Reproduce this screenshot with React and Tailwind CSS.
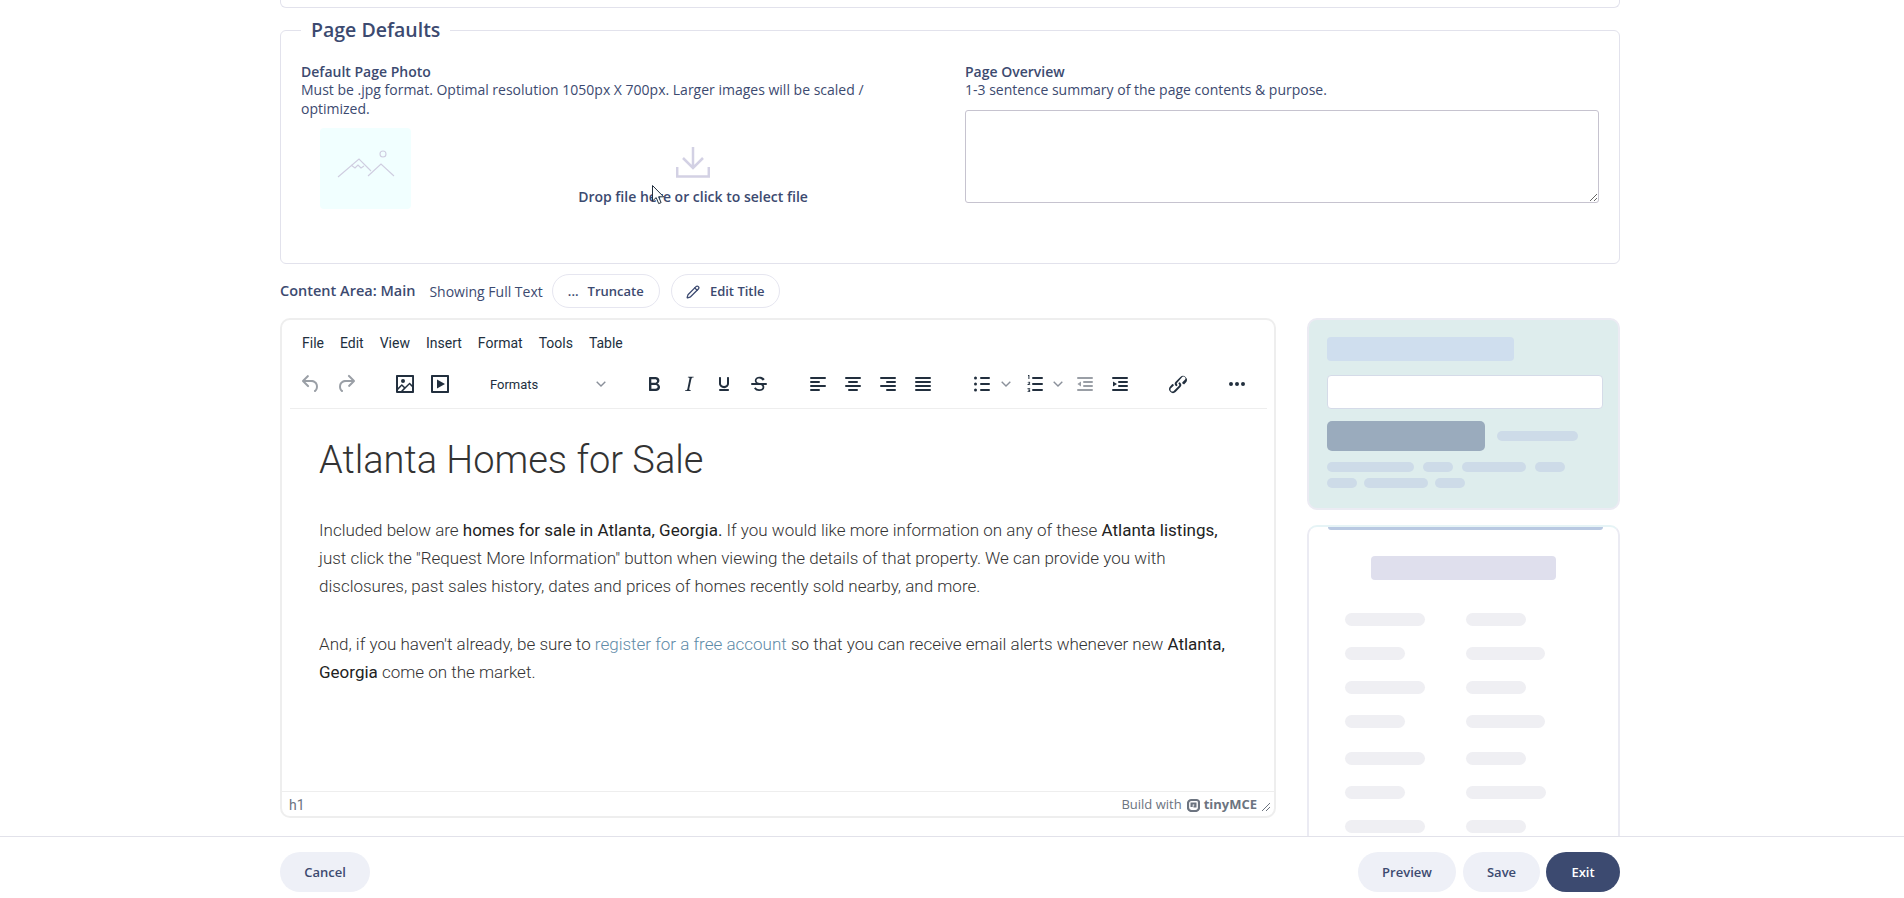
import React from 'react';
import { Pencil } from 'lucide-react';

const ICONS = {
  undo: 'M6.4 8H12c3.7 0 6.2 2 6.8 5.1.6 2.7-.4 5.6-2.3 6.8a1 1 0 0 1-1-1.8c1.1-.6 1.8-2.7 1.4-4.6-.5-2.1-2.1-3.5-4.9-3.5H6.4l3.3 3.3a1 1 0 1 1-1.4 1.4l-5-5a1 1 0 0 1 0-1.4l5-5a1 1 0 0 1 1.4 1.4L6.4 8Z',
  redo: 'M17.6 10H12c-2.8 0-4.4 1.4-4.9 3.5-.4 2 .3 4 1.4 4.6a1 1 0 1 1-1 1.8c-2-1.2-2.9-4.1-2.3-6.8.6-3 3-5.1 6.8-5.1h5.6l-3.3-3.3a1 1 0 1 1 1.4-1.4l5 5a1 1 0 0 1 0 1.4l-5 5a1 1 0 0 1-1.4-1.4l3.3-3.3Z',
  image: 'M5 15.7l3.3-3.2c.3-.3.7-.3 1 0L12 15l4.1-4c.3-.4.8-.4 1 0l2 1.9V5H5v10.7ZM5 18V19h3l2.8-2.9-2-2L5 17.9Zm14-3l-2.5-2.4-6.4 6.5H19v-4ZM4 3h16c.6 0 1 .4 1 1v16c0 .6-.4 1-1 1H4a1 1 0 0 1-1-1V4c0-.6.4-1 1-1Zm6 8a2 2 0 1 0 0-4 2 2 0 0 0 0 4Z',
  media: 'M4 3h16c.6 0 1 .4 1 1v16c0 .6-.4 1-1 1H4a1 1 0 0 1-1-1V4c0-.6.4-1 1-1Zm1 2v14h14V5H5Zm4 2.5 8 4.5-8 4.5v-9Z',
  bold: 'M7.8 19c-.3 0-.5 0-.6-.2l-.2-.5V5.7c0-.2 0-.4.2-.5l.6-.2h5c1.5 0 2.7.3 3.5 1 .7.6 1.1 1.4 1.1 2.5a3 3 0 0 1-.6 1.9c-.4.6-1 1-1.6 1.2.4.1.9.3 1.3.6s.8.7 1 1.2c.4.4.5 1 .5 1.6 0 1.3-.4 2.3-1.3 3-.8.7-2.1 1-3.8 1H7.8Zm5-8.3c.6 0 1.2-.1 1.6-.5.4-.3.6-.7.6-1.3 0-1.1-.8-1.7-2.3-1.7H9.3v3.5h3.4Zm.5 6c.7 0 1.3-.1 1.7-.4.4-.4.6-.9.6-1.5s-.2-1-.7-1.4c-.4-.3-1-.4-2-.4H9.4v3.8h4Z',
  italic: 'M16.7 4.7l-.1.9h-.3c-.6 0-1 0-1.4.3-.3.3-.4.6-.5 1.1l-2.1 9.8v.6c0 .5.4.8 1.4.8h.2l-.2.8H8l.2-.8h.2c1.1 0 1.8-.5 2-1.5l2-9.8.1-.5c0-.6-.4-.8-1.4-.8h-.3l.2-.9h5.8Z',
  underline: 'M16 5c.6 0 1 .4 1 1v5.5a4 4 0 0 1-.4 1.8l-1 1.4a5.3 5.3 0 0 1-5.5 1 5 5 0 0 1-1.6-1c-.5-.4-.8-.9-1.1-1.4a4 4 0 0 1-.4-1.8V6c0-.6.4-1 1-1s1 .4 1 1v5.5c0 .3 0 .6.2 1l.6.7a3.3 3.3 0 0 0 2.2.8 3.4 3.4 0 0 0 2.2-.8c.3-.2.4-.5.6-.8l.2-.9V6c0-.6.4-1 1-1ZM8 17h8c.6 0 1 .4 1 1s-.4 1-1 1H8a1 1 0 0 1 0-2Z',
  strike: 'M15.6 8.5c-.5-.7-1-1.1-1.3-1.3-.6-.4-1.3-.6-2-.6-2.7 0-2.8 1.7-2.8 2.1 0 1.6 1.8 2 3.2 2.3 4.4.9 4.6 2.8 4.6 3.9 0 1.4-.7 4.1-5 4.1A6.2 6.2 0 0 1 7 16.4l1.5-1.1c.4.6 1.6 2 3.7 2 1.6 0 2.5-.4 3-1 .3-.4.3-.9.3-1.3 0-1.4-1.1-1.9-3.1-2.3-1.6-.4-4.6-1.2-4.6-4.1 0-2.6 2.2-3.9 4.7-3.9 1.6 0 3 .5 4 1.2.4.3.8.7 1.2 1.3l-1.7 1.3ZM5 11h14a1 1 0 0 1 0 2H5a1 1 0 0 1 0-2Z',
  alignLeft: 'M5 5h14a1 1 0 0 1 0 2H5a1 1 0 1 1 0-2Zm0 4h8a1 1 0 0 1 0 2H5a1 1 0 1 1 0-2Zm0 8h8a1 1 0 0 1 0 2H5a1 1 0 0 1 0-2Zm0-4h14a1 1 0 0 1 0 2H5a1 1 0 0 1 0-2Z',
  alignCenter: 'M5 5h14a1 1 0 0 1 0 2H5a1 1 0 1 1 0-2Zm3 4h8a1 1 0 0 1 0 2H8a1 1 0 1 1 0-2Zm0 8h8a1 1 0 0 1 0 2H8a1 1 0 0 1 0-2Zm-3-4h14a1 1 0 0 1 0 2H5a1 1 0 0 1 0-2Z',
  alignRight: 'M5 5h14a1 1 0 0 1 0 2H5a1 1 0 1 1 0-2Zm6 4h8a1 1 0 0 1 0 2h-8a1 1 0 0 1 0-2Zm0 8h8a1 1 0 0 1 0 2h-8a1 1 0 0 1 0-2Zm-6-4h14a1 1 0 0 1 0 2H5a1 1 0 0 1 0-2Z',
  justify: 'M5 5h14a1 1 0 0 1 0 2H5a1 1 0 1 1 0-2Zm0 4h14a1 1 0 0 1 0 2H5a1 1 0 1 1 0-2Zm0 4h14a1 1 0 0 1 0 2H5a1 1 0 0 1 0-2Zm0 4h14a1 1 0 0 1 0 2H5a1 1 0 0 1 0-2Z',
  bullets: 'M11 5h8a1 1 0 0 1 0 2h-8a1 1 0 0 1 0-2Zm0 6h8a1 1 0 0 1 0 2h-8a1 1 0 0 1 0-2Zm0 6h8a1 1 0 0 1 0 2h-8a1 1 0 0 1 0-2ZM5.5 4.5a1.5 1.5 0 1 1 0 3 1.5 1.5 0 0 1 0-3Zm0 6a1.5 1.5 0 1 1 0 3 1.5 1.5 0 0 1 0-3Zm0 6a1.5 1.5 0 1 1 0 3 1.5 1.5 0 0 1 0-3Z',
  numbers: 'M10 5h9a1 1 0 0 1 0 2h-9a1 1 0 0 1 0-2Zm0 6h9a1 1 0 0 1 0 2h-9a1 1 0 0 1 0-2Zm0 6h9a1 1 0 0 1 0 2h-9a1 1 0 0 1 0-2ZM5 3h1.4v4H5.4V4H5V3Zm-.5 7.4c.3-.5.8-.7 1.4-.7.8 0 1.3.4 1.3 1 0 .5-.3.9-.9 1.3l-.5.3h1.4v.8H4.4v-.7l1.3-1c.4-.3.5-.5.5-.7 0-.2-.1-.3-.4-.3-.2 0-.4.1-.6.4l-.7-.4Zm0 5.8h2.7v.7l-1 .9c.7.1 1.1.5 1.1 1.1 0 .7-.6 1.2-1.5 1.2-.5 0-1-.1-1.4-.5l.4-.7c.3.2.6.4 1 .4.3 0 .5-.1.5-.3s-.2-.3-.6-.3h-.4v-.6l.8-.8H4.5v-.8Z',
  outdent: 'M5 5h14a1 1 0 0 1 0 2H5a1 1 0 1 1 0-2Zm6 4h8a1 1 0 0 1 0 2h-8a1 1 0 0 1 0-2Zm0 4h8a1 1 0 0 1 0 2h-8a1 1 0 0 1 0-2Zm-6 4h14a1 1 0 0 1 0 2H5a1 1 0 0 1 0-2Zm-.6-5L8 9.6v4.8L4.4 12Z',
  indent: 'M5 5h14a1 1 0 0 1 0 2H5a1 1 0 1 1 0-2Zm6 4h8a1 1 0 0 1 0 2h-8a1 1 0 0 1 0-2Zm0 4h8a1 1 0 0 1 0 2h-8a1 1 0 0 1 0-2Zm-6 4h14a1 1 0 0 1 0 2H5a1 1 0 0 1 0-2Zm4-5L5 14.6V9.4L9 12Z',
  link: 'M6.2 12.3a1 1 0 0 1 1.4 1.4l-2.1 2.1a2 2 0 1 0 2.7 2.7l4.8-4.8a1 1 0 0 0 0-1.4 1 1 0 1 1 1.4-1.3 2.9 2.9 0 0 1 0 4L9.6 20a3.9 3.9 0 0 1-5.5-5.5l2-2.2Zm11.6-.6a1 1 0 0 1-1.4-1.4l2-2a2 2 0 1 0-2.6-2.8L11 10.9a1 1 0 0 0 0 1.4 1 1 0 1 1-1.4 1.4 2.9 2.9 0 0 1 0-4L14.4 5a3.9 3.9 0 0 1 5.5 5.5l-2.1 2.2Z',
  more: 'M6 10a2 2 0 1 1 0 4 2 2 0 0 1 0-4Zm12 0a2 2 0 1 1 0 4 2 2 0 0 1 0-4Zm-6 0a2 2 0 1 1 0 4 2 2 0 0 1 0-4Z',
};

function ToolIcon({ name, className = '' }) {
  return (
    <span className={`w-[35px] h-[35px] flex items-center justify-center shrink-0 ${className}`}>
      <svg width="24" height="24" viewBox="0 0 24 24" fill="currentColor">
        <path d={ICONS[name]} />
      </svg>
    </span>
  );
}

function Chevron({ className = '' }) {
  return (
    <svg className={className} width="10" height="6" viewBox="0 0 10 6" fill="none" stroke="currentColor" strokeWidth="1.4">
      <path d="M.7.7 5 5l4.3-4.3" />
    </svg>
  );
}

function Pill({ className }) {
  return <div className={`h-[10px] rounded-full bg-[#cddbe8] ${className}`} />;
}

const leftRows = ['w-[80px]', 'w-[60px]', 'w-[80px]', 'w-[60px]', 'w-[80px] mt-[3px]', 'w-[60px]', 'w-[80px]'];
const rightRows = ['w-[60px]', 'w-[79px]', 'w-[60px]', 'w-[79px]', 'w-[60px] mt-[3px]', 'w-[80px]', 'w-[60px]'];

export default function App() {
  return (
    <div className="h-screen flex flex-col overflow-hidden bg-white font-['Open_Sans',sans-serif] text-[14px] text-[#3c4a70]">
      <main className="flex-1 min-h-0 overflow-hidden">
        <div className="ml-[280px] w-[1340px]">
          {/* Card above, scrolled off */}
          <div className="h-[8px] border border-t-0 border-[#e2e2ec] rounded-b-md" />

          {/* Page defaults */}
          <fieldset className="mt-[8px] h-[248px] border border-[#e2e2ec] rounded-md px-[20px]">
            <legend className="px-[10px] text-[19.5px] leading-[28px] font-semibold">Page Defaults</legend>
            <div className="grid grid-cols-[632px_632px] gap-x-[32px] pt-[19px]">
              <div>
                <div className="font-semibold leading-[17px]">Default Page Photo</div>
                <p className="leading-[19px]">
                  Must be .jpg format. Optimal resolution 1050px X 700px. Larger images will be scaled / optimized.
                </p>
                <div className="flex mt-[10px]">
                  <div className="ml-[19px] w-[91px] h-[81px] bg-[#f1ffff] rounded-sm flex justify-center pt-[22px]">
                    <svg width="58" height="28" viewBox="0 0 58 28" fill="none" stroke="#cfcde0" strokeWidth="1.1">
                      <path d="M1 27 22 9l12 12M14 15l4 3 3-3 3 3 3-2M31 26l13-12 13 12" />
                      <circle cx="46" cy="4" r="3" />
                    </svg>
                  </div>
                  <div className="ml-[130px] w-[304px] flex flex-col items-center pt-[19px]">
                    <svg width="34" height="31" viewBox="0 0 34 31" fill="none" stroke="#d3d1e4" strokeWidth="2.5">
                      <path d="M17 0v21M7 11l10 10 10-10M1.2 20v9.5h31.6V20" />
                    </svg>
                    <div className="mt-[9px] font-semibold leading-[19px] whitespace-nowrap">Drop file here or click to select file</div>
                  </div>
                </div>
              </div>
              <div>
                <div className="font-semibold leading-[17px]">Page Overview</div>
                <p className="leading-[19px]">1-3 sentence summary of the page contents &amp; purpose.</p>
                <textarea className="block mt-[11px] w-[634px] h-[93px] border-[1.5px] border-[#c6c3cf] rounded-[3px]" />
              </div>
            </div>
          </fieldset>

          {/* Content area controls */}
          <div className="mt-[10px] h-[34px] flex items-center">
            <span className="font-semibold text-[14.5px]">Content Area: Main</span>
            <span className="ml-[14px]">Showing Full Text</span>
            <button className="ml-[9px] w-[108px] h-[34px] pt-[2px] border border-[#e6e6f0] rounded-full font-semibold text-[13px] flex items-center justify-center gap-[9px]">
              <span>...</span>
              <span>Truncate</span>
            </button>
            <button className="ml-[11px] w-[109px] h-[34px] pt-[2px] border border-[#e6e6f0] rounded-full font-semibold text-[13px] flex items-center justify-center gap-[10px]">
              <Pencil size={14} strokeWidth={2.2} />
              <span>Edit Title</span>
            </button>
          </div>

          <div className="mt-[10px] flex items-start">
            {/* Editor */}
            <div className="w-[996px] h-[500px] border-2 border-[#eeeeee] rounded-[10px] flex flex-col font-['Roboto',sans-serif] text-[#222f3e]">
              <div className="h-[46px] flex items-center gap-[16px] pl-[20px] text-[14px]">
                {['File', 'Edit', 'View', 'Insert', 'Format', 'Tools', 'Table'].map((item) => (
                  <span key={item}>{item}</span>
                ))}
              </div>
              <div className="ml-[8px] mr-[7px] h-[43px] pb-[7px] flex items-center border-b border-[#eeeeee]">
                <ToolIcon name="undo" className="ml-[3px] text-[#9a9fa6]" />
                <ToolIcon name="redo" className="text-[#9a9fa6]" />
                <ToolIcon name="image" className="ml-[24px]" />
                <ToolIcon name="media" />
                <div className="ml-[18px] w-[136px] flex items-center justify-between pl-[15px] pr-[5px]">
                  <span className="text-[13px] mt-[2px]">Formats</span>
                  <Chevron className="text-[#8a909a]" />
                </div>
                <ToolIcon name="bold" className="ml-[25px]" />
                <ToolIcon name="italic" />
                <ToolIcon name="underline" />
                <ToolIcon name="strike" />
                <ToolIcon name="alignLeft" className="ml-[24px]" />
                <ToolIcon name="alignCenter" />
                <ToolIcon name="alignRight" />
                <ToolIcon name="justify" />
                <ToolIcon name="bullets" className="ml-[24px]" />
                <Chevron className="ml-[2px] text-[#8a909a]" />
                <ToolIcon name="numbers" className="ml-[6px]" />
                <Chevron className="ml-[1px] text-[#8a909a]" />
                <ToolIcon name="outdent" className="ml-[4px] text-[#9a9fa6]" />
                <ToolIcon name="indent" />
                <ToolIcon name="link" className="ml-[23px]" />
                <ToolIcon name="more" className="ml-[24px]" />
              </div>
              <div className="flex-1 min-h-0 pl-[37px] pt-[27px] w-[951px] text-[17px] leading-[28px] font-light text-[#333]">
                <h1 className="text-[38px] leading-[48px] font-light text-[#333] mb-[32px]">Atlanta Homes for Sale</h1>
                <p className="mb-[30px]">
                  Included below are <strong className="font-normal text-[#222]">homes for sale in Atlanta, Georgia.</strong> If you would like more information on any of these <strong className="font-normal text-[#222]">Atlanta listings,</strong> just click the "Request More Information" button when viewing the details of that property. We can provide you with disclosures, past sales history, dates and prices of homes recently sold nearby, and more.
                </p>
                <p>
                  And, if you haven't already, be sure to <a className="text-[#5e8ba8]">register for a free account</a> so that you can receive email alerts whenever new <strong className="font-normal text-[#222]">Atlanta, Georgia</strong> come on the market.
                </p>
              </div>
              <div className="h-[25px] pt-[2px] border-t border-[#eeeeee] flex items-center justify-between pl-[7px] pr-[4px] text-[14px] text-[#6c7480]">
                <span>h1</span>
                <div className="flex items-center">
                  <span className="font-['Open_Sans',sans-serif] text-[13px]">Build with</span>
                  <svg className="ml-[5px]" width="13" height="14" viewBox="0 0 13 14" fill="none" stroke="#6c7480" strokeWidth="2.2">
                    <path d="M4.5 2h5A2.5 2.5 0 0 1 12 4.5v5A3.5 3.5 0 0 1 8.500 13h-4A3.500 3.500 0 0 1 1 9.500v-4A3.500 3.500 0 0 1 4.500 2Z" />
                    <path d="M4.600 9V5.500h3.800v3H6.500" />
                  </svg>
                  <span className="ml-[4px] font-['Open_Sans',sans-serif] font-bold text-[13px]">tinyMCE</span>
                  <svg className="ml-[5px] mt-[4px]" width="8" height="8" viewBox="0 0 8 8" fill="none" stroke="#6c7480" strokeWidth="1">
                    <path d="M0 8 8 0M4 8l4-4" />
                  </svg>
                </div>
              </div>
            </div>

            {/* Template previews */}
            <div className="ml-[31px] w-[313px] flex flex-col gap-[15px]">
              <div className="h-[192px] bg-[#deeded] border-2 border-[#ebebf3] rounded-[10px] px-[18px] pt-[17px]">
                <div className="w-[187px] h-[24px] rounded-[4px] bg-[#cfdeee]" />
                <div className="mt-[14px] w-[276px] h-[34px] rounded-[4px] bg-white border border-[#d5dbe8]" />
                <div className="mt-[12px] flex items-center">
                  <div className="w-[158px] h-[30px] rounded-[5px] bg-[#9aabbd]" />
                  <Pill className="ml-[12px] w-[81px]" />
                </div>
                <div className="mt-[11px] flex gap-[9px]">
                  <Pill className="w-[87px]" />
                  <Pill className="w-[30px]" />
                  <Pill className="w-[64px]" />
                  <Pill className="w-[30px]" />
                </div>
                <div className="mt-[6px] flex gap-[7px]">
                  <Pill className="w-[30px]" />
                  <Pill className="w-[64px]" />
                  <Pill className="w-[30px]" />
                </div>
              </div>
              <div className="relative h-[400px] border-2 border-[#ebebf3] border-t-[#e6f4f6] rounded-t-[10px] pt-[29px]">
                <div className="absolute top-0 left-[19px] w-[275px] h-[3px] bg-[#b9c9e2] rounded-b-sm" />
                <div className="mx-auto w-[185px] h-[24px] rounded-[4px] bg-[#dfdfed]" />
                <div className="mt-[33px] ml-[36px] grid grid-cols-[121px_1fr] gap-y-[21px]">
                  {leftRows.map((w, i) => (
                    <React.Fragment key={i}>
                      <div className={`h-[13px] rounded-full bg-[#efeff3] ${w}`} />
                      <div className={`h-[13px] rounded-full bg-[#efeff3] ${rightRows[i]}`} />
                    </React.Fragment>
                  ))}
                </div>
              </div>
            </div>
          </div>
        </div>
      </main>

      <footer className="h-[62px] shrink-0 border-t border-[#e2e2ea] bg-white">
        <div className="ml-[280px] w-[1340px] pt-[15px] flex items-center font-semibold text-[13px]">
          <button className="w-[90px] h-[40px] pt-[1px] rounded-full bg-[#eef0f7]">Cancel</button>
          <button className="ml-auto w-[98px] h-[40px] pt-[1px] rounded-full bg-[#eef0f7]">Preview</button>
          <button className="ml-[7px] w-[77px] h-[40px] pt-[1px] rounded-full bg-[#eef0f7]">Save</button>
          <button className="ml-[6px] w-[74px] h-[40px] pt-[1px] rounded-full bg-[#3c4a70] text-white">Exit</button>
        </div>
      </footer>

      {/* Mouse pointer caught in the capture */}
      <svg className="absolute left-[652px] top-[185px]" width="14" height="20" viewBox="0 0 14 20">
        <path d="M.5.5V16l3.700-3.400 2.500 6 2.400-1-2.500-5.800h5L.5.5Z" fill="#fff" stroke="#222f3e" strokeWidth="1" />
      </svg>
    </div>
  );
}
